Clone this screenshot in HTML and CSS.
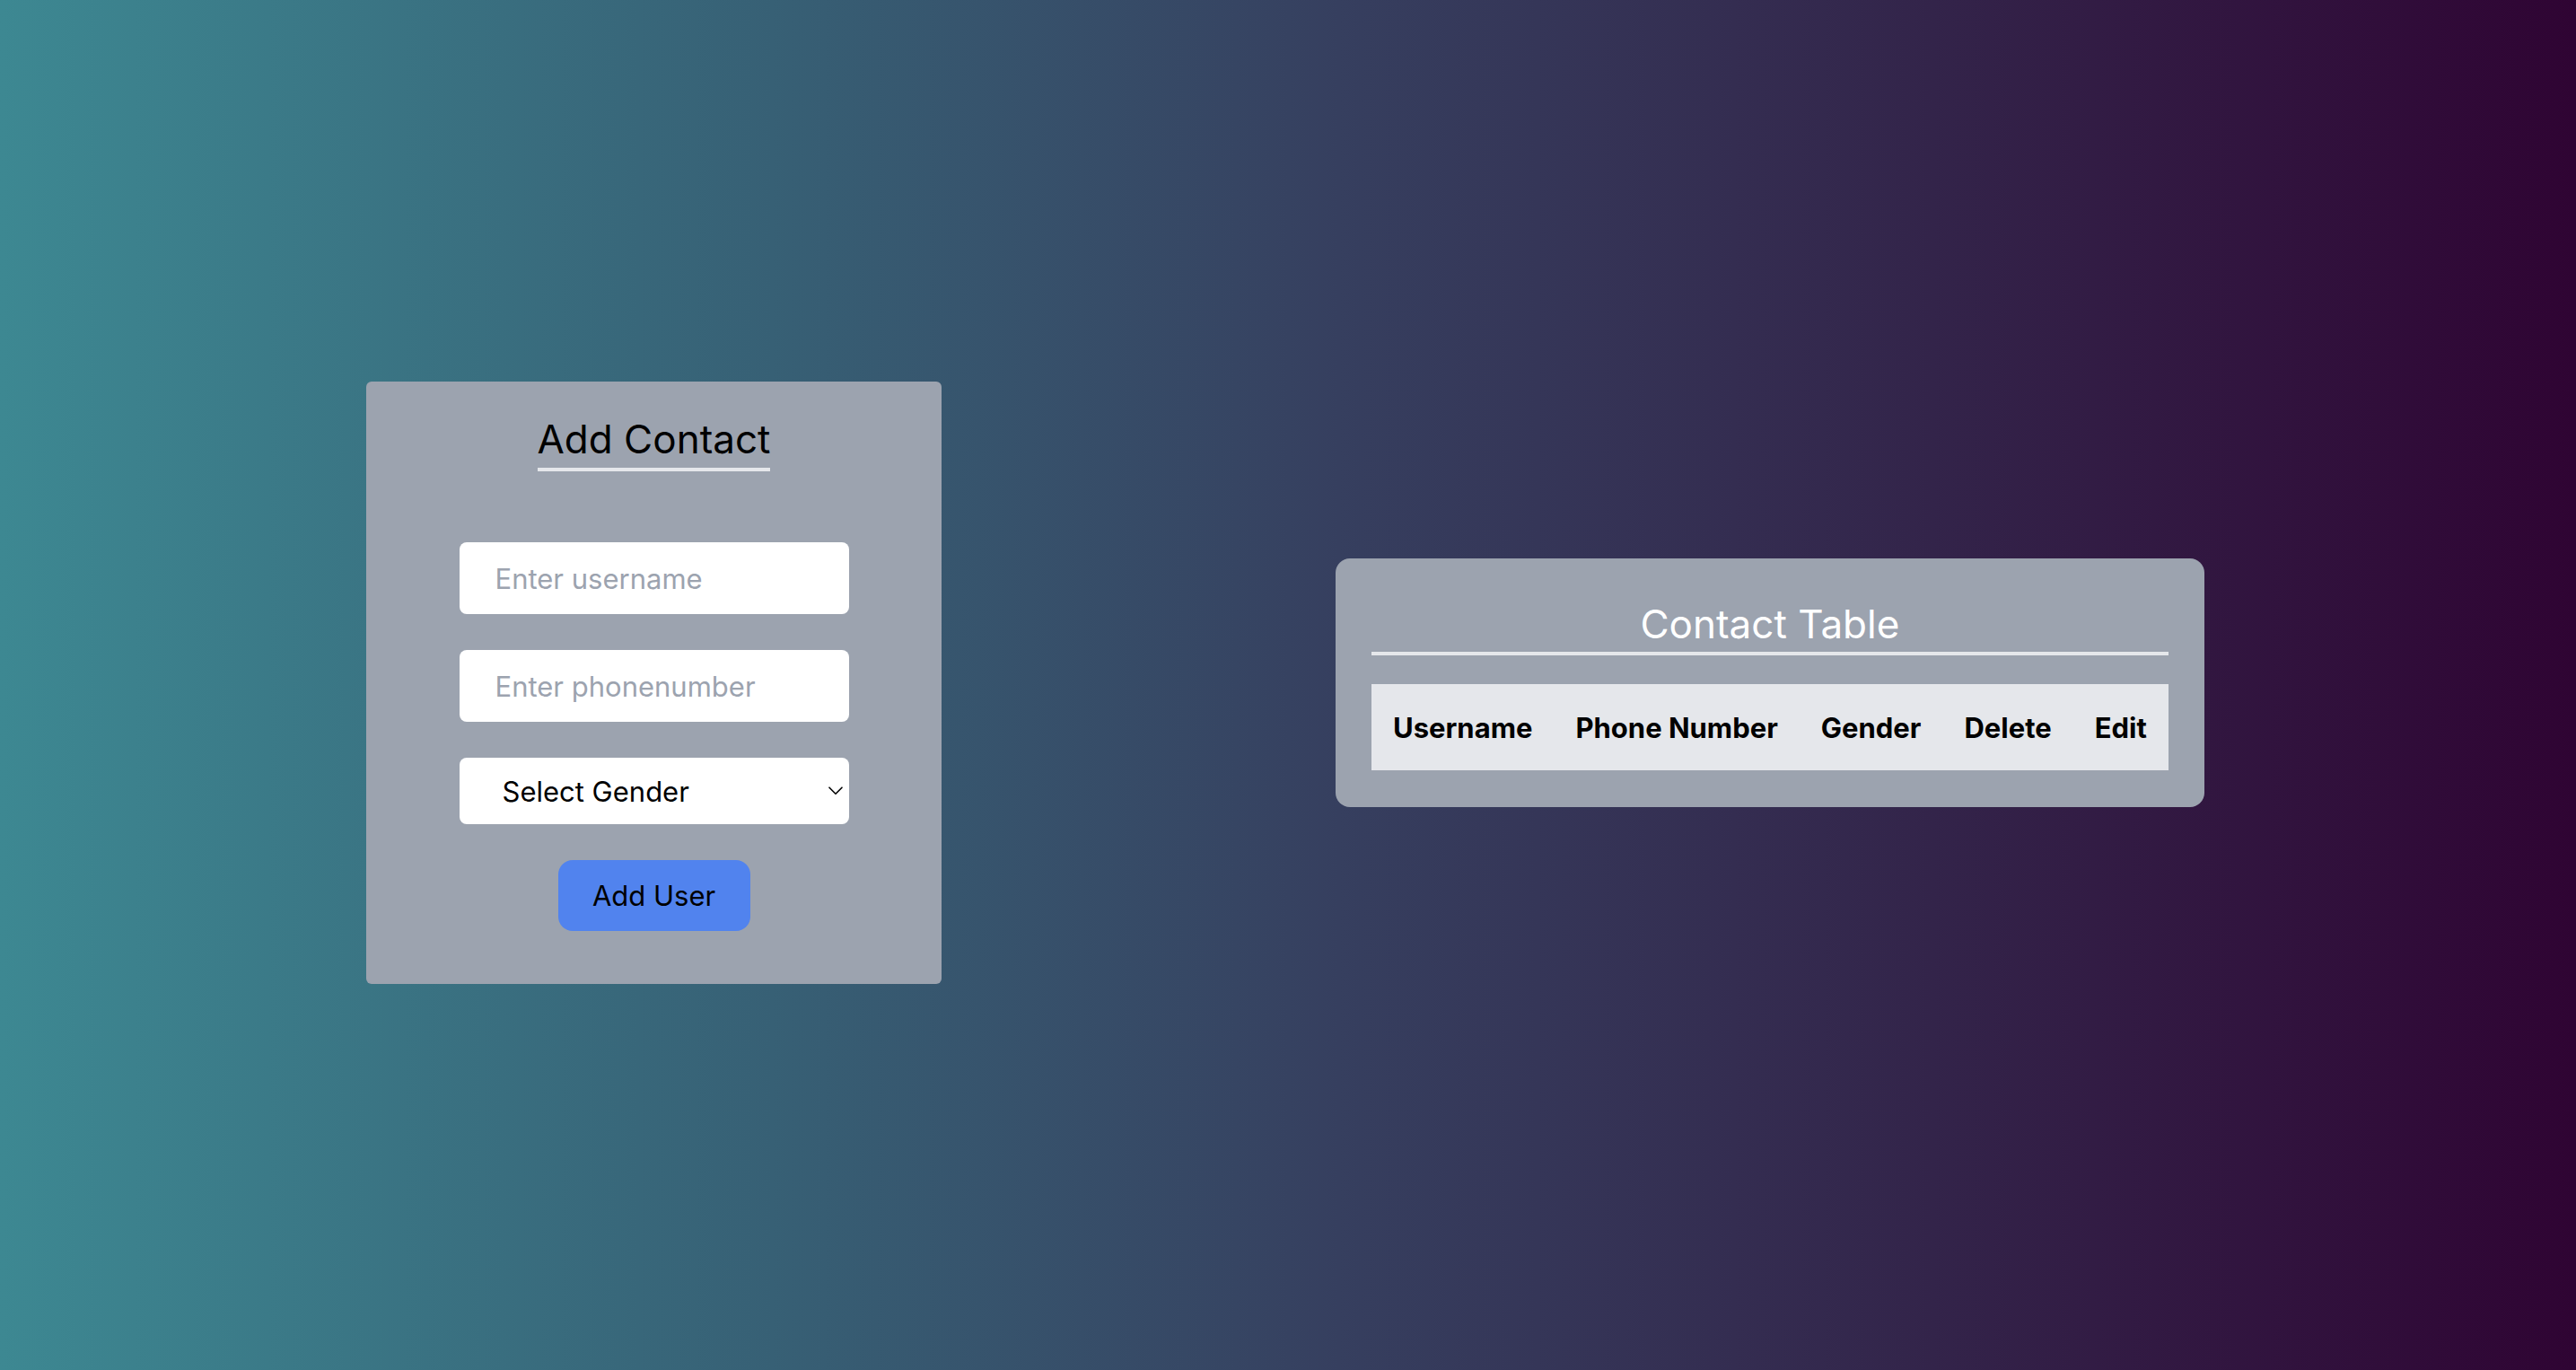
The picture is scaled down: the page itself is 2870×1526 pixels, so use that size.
FILE: index.html
```html
<!DOCTYPE html>
<html lang="en">
<head>
<meta charset="utf-8">
<title>Contacts</title>
<link rel="stylesheet" href="styles.css">
</head>
<body>
<main class="page">
  <section class="card form-card">
    <h2 class="form-title">Add Contact</h2>
    <form class="contact-form">
      <input class="field" type="text" placeholder="Enter username">
      <input class="field" type="text" placeholder="Enter phonenumber">
      <div class="select-wrap">
        <select class="field select-field">
          <option>Select Gender</option>
          <option>Male</option>
          <option>Female</option>
        </select>
        <svg class="chevron" width="16" height="10" viewBox="0 0 16 10" aria-hidden="true"><path d="M1 1.2 L8 8.2 L15 1.2" fill="none" stroke="#000" stroke-width="1.6" stroke-linecap="round" stroke-linejoin="round"/></svg>
      </div>
      <button class="add-btn" type="button">Add User</button>
    </form>
  </section>

  <section class="card table-card">
    <h2 class="table-title">Contact Table</h2>
    <table class="contact-table">
      <thead>
        <tr>
          <th>Username</th>
          <th>Phone Number</th>
          <th>Gender</th>
          <th>Delete</th>
          <th>Edit</th>
        </tr>
      </thead>
    </table>
  </section>
</main>
</body>
</html>
```

FILE: styles.css
```css
html, body {
  margin: 0;
  padding: 0;
  height: 100%;
}

body {
  font-family: Inter, "Noto Sans", "Liberation Sans", sans-serif;
  background: linear-gradient(to right, #3d8892 0%, #376075 30%, #363f5f 52%, #33244a 75%, #2f0433 100%);
  color: #000;
}

.page {
  height: 100%;
  display: flex;
  align-items: center;
  justify-content: flex-start;
  padding-left: 408px;
  padding-bottom: 5px;
  gap: 439px;
  box-sizing: border-box;
}

.card {
  background: #9ca3af;
  box-sizing: border-box;
}

.form-card {
  width: 641px;
  height: 671px;
  border-radius: 6px;
  padding-top: 32px;
  display: flex;
  flex-direction: column;
  align-items: center;
}

.form-title {
  margin: 0;
  font-size: 44px;
  font-weight: 400;
  line-height: 64px;
  color: #000;
  border-bottom: 4px solid #e5e7eb;
}

.contact-form {
  margin-top: 79px;
  width: 434px;
  display: flex;
  flex-direction: column;
  align-items: center;
  gap: 40px;
}

.field {
  width: 100%;
  height: 80px;
  box-sizing: border-box;
  border: none;
  border-radius: 8px;
  background: #fff;
  padding: 0 40px;
  font-family: inherit;
  font-size: 31px;
  color: #000;
  outline: none;
}

.field::placeholder {
  color: #9ca3af;
}

.select-wrap {
  position: relative;
  width: 100%;
}

.select-field {
  height: 74px;
  padding-left: 48px;
  -webkit-appearance: none;
  appearance: none;
  display: block;
}

.chevron {
  position: absolute;
  right: 7px;
  top: 32px;
}

.add-btn {
  width: 214px;
  height: 79px;
  border: none;
  border-radius: 16px;
  background: #5183ee;
  font-family: inherit;
  font-size: 31px;
  color: #000;
  cursor: pointer;
}

.table-card {
  border-radius: 16px;
  padding: 42px 40px 41px;
  display: flex;
  flex-direction: column;
}

.table-title {
  margin: 0 0 32px;
  text-align: center;
  font-size: 44px;
  font-weight: 400;
  line-height: 62px;
  color: #fff;
  border-bottom: 4px solid #e5e7eb;
}

.contact-table {
  border-collapse: collapse;
  background: #e5e7eb;
}

.contact-table th {
  padding: 0 24px;
  height: 96px;
  font-size: 31px;
  font-weight: 700;
  color: #000;
  text-align: left;
  white-space: nowrap;
}
```
